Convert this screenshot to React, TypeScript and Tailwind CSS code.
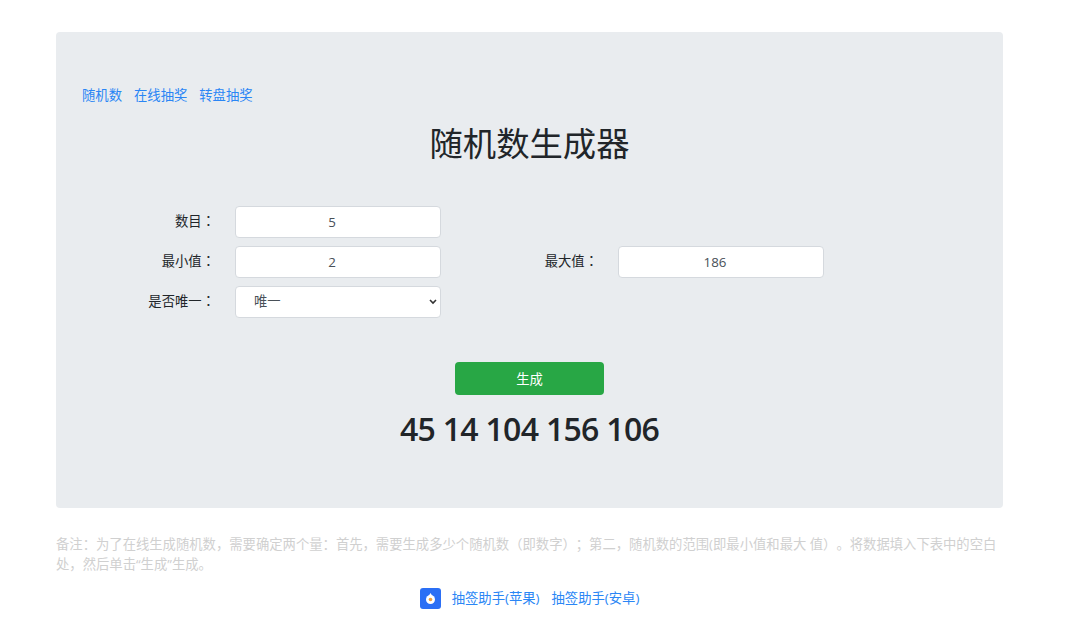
export default function App() {
  const label = "-mr-[2px] text-right text-[13.33px] text-[#212529] leading-[30px]";
  const colon = <span className="font-['Noto_Sans_CJK_TC',sans-serif]">：</span>;
  const input = "h-[32px] w-full rounded-[4px] border border-[#d5d9de] bg-white pr-3 text-center text-[13.33px] text-[#495057] outline-none";
  return (
    <div className="h-[618px] w-[1080px] overflow-hidden bg-white pt-8 pl-14 font-['Open_Sans','Noto_Sans_CJK_SC',sans-serif] [text-spacing-trim:space-all]">
      <div className="h-[476px] w-[947px] rounded-[4px] bg-[#e9ecef] px-[26px] pt-[53px]">
        <nav className="flex gap-3 text-[13.33px] leading-[20px] text-[#2a86f5]">
          <a>随机数</a>
          <a>在线抽奖</a>
          <a>转盘抽奖</a>
        </nav>
        <h1 className="mt-[18px] text-center text-[33.33px] leading-[40px] font-normal text-[#212529]">随机数生成器</h1>
        <form className="mt-[43px] grid grid-cols-[131px_206px_133px_206px] auto-rows-[32px] gap-x-[22px] gap-y-[8px]">
          <label className={label}>数目{colon}</label>
          <input className={input} defaultValue="5" />
          <div className="col-span-2" />
          <label className={label}>最小值{colon}</label>
          <input className={input} defaultValue="2" />
          <label className={label}>最大值{colon}</label>
          <input className={input} defaultValue="186" />
          <label className={label}>是否唯一{colon}</label>
          <div className="relative">
            <select className="h-[32px] w-full appearance-none rounded-[4px] border border-[#d5d9de] bg-white pl-[18px] text-[13.33px] text-[#495057] outline-none">
              <option>唯一</option>
            </select>
            <svg width="8" height="6" viewBox="0 0 8 6" className="pointer-events-none absolute top-[13px] right-[4px]">
              <path d="M1 1l3 3 3-3" fill="none" stroke="#333" strokeWidth="1.6" />
            </svg>
          </div>
        </form>
        <div className="mt-[44px] flex justify-center">
          <button className="h-[33px] w-[149px] rounded-[4px] bg-[#28a745] pt-[2px] text-[13.33px] text-white">生成</button>
        </div>
        <div className="mt-[14px] text-center text-[32px] leading-[40px] font-semibold tracking-[-0.7px] text-[#212529]">45 14 104 156 106</div>
      </div>
      <p className="mt-[26px] w-[947px] text-[13.33px] leading-[20px] text-[#d0d0d0]">
        备注：为了在线生成随机数，需要确定两个量：首先，需要生成多少个随机数（即数字）；第二，随机数的范围(即最小值和最大 值）。将数据填入下表中的空白处，然后单击“生成”生成。
      </p>
      <div className="mt-[14px] flex w-[947px] items-center justify-center text-[13.33px] text-[#2a86f5]">
        <svg width="21" height="21" viewBox="0 0 21 21" className="mr-[11px]">
          <rect width="21" height="21" rx="3" fill="#2b6ff5" />
          <circle cx="10.5" cy="11.5" r="4.5" fill="#fff" />
          <path d="M10.5 5l2.2 3.5h-4.4z" fill="#fff" />
          <circle cx="10.5" cy="11.5" r="1.8" fill="#f0a040" />
        </svg>
        <a>抽签助手(苹果)</a>
        <a className="ml-3">抽签助手(安卓)</a>
      </div>
    </div>
  );
}
